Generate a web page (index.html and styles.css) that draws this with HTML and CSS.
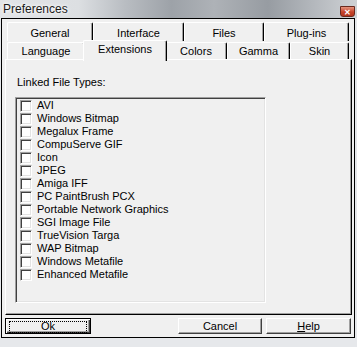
FILE: index.html
```html
<!DOCTYPE html>
<html lang="en">
<head>
    <meta charset="UTF-8">
    <meta name="viewport" content="width=device-width, initial-scale=1.0">
    <title>Preferences</title>
    <link rel="stylesheet" href="styles.css">
</head>
<body>
    <div class="window">
        <div class="titlebar">
            <span class="title">Preferences</span>
            <span class="close">&#x2715;</span>
        </div>

        <div class="dialog">
            <div class="tab-row back">
                <div class="tab w86">General</div>
                <div class="tab w91">Interface</div>
                <div class="tab w80">Files</div>
                <div class="tab w85">Plug-ins</div>
            </div>
            <div class="tab-row front">
                <div class="tab w78">Language</div>
                <div class="tab w80 active">Extensions</div>
                <div class="tab w62">Colors</div>
                <div class="tab w63">Gamma</div>
                <div class="tab w59">Skin</div>
            </div>

            <div class="panel">
                <div class="label">Linked File Types:</div>
                <div class="listbox">
                    <ul>
                        <li><span class="check"></span>AVI</li>
                        <li><span class="check"></span>Windows Bitmap</li>
                        <li><span class="check"></span>Megalux Frame</li>
                        <li><span class="check"></span>CompuServe GIF</li>
                        <li><span class="check"></span>Icon</li>
                        <li><span class="check"></span>JPEG</li>
                        <li><span class="check"></span>Amiga IFF</li>
                        <li><span class="check"></span>PC PaintBrush PCX</li>
                        <li><span class="check"></span>Portable Network Graphics</li>
                        <li><span class="check"></span>SGI Image File</li>
                        <li><span class="check"></span>TrueVision Targa</li>
                        <li><span class="check"></span>WAP Bitmap</li>
                        <li><span class="check"></span>Windows Metafile</li>
                        <li><span class="check"></span>Enhanced Metafile</li>
                    </ul>
                </div>
            </div>

            <div class="buttons">
                <button class="btn default"><span class="focus">Ok</span></button>
                <div class="spacer"></div>
                <button class="btn cancel">Cancel</button>
                <button class="btn help"><u>H</u>elp</button>
            </div>
        </div>
    </div>
</body>
</html>
```

FILE: styles.css
```css
body {
    margin: 0;
    background: #e6e8eb;
    font-family: "Liberation Sans", Arial, sans-serif;
    font-size: 11px;
    color: #000;
}
.window {
    width: 357px;
    height: 347px;
    display: flex;
    flex-direction: column;
}
.titlebar {
    height: 18px;
    display: flex;
    justify-content: space-between;
    align-items: flex-start;
    background: linear-gradient(to right, #e2e4e7 0%, #dcdfe2 22%, #b9bdc2 35%, #9da2a8 48%, #aeb2b7 60%, #979ca2 75%, #b4b8bd 88%, #cfd2d5 100%);
}
.title {
    font-size: 12px;
    line-height: 12px;
    padding: 3px 0 0 3px;
    color: #1a1a1a;
    text-shadow: 0 0 5px #fff, 0 0 3px #fff;
}
.close {
    width: 15px;
    height: 11px;
    margin: 6px 2px 0 0;
    border: 1px solid #6b2a1e;
    border-radius: 0 0 3px 3px;
    background: linear-gradient(#e5937d, #c6442b 55%, #b5351d);
    color: #fff;
    font-size: 8px;
    font-weight: bold;
    line-height: 11px;
    text-align: center;
    box-sizing: border-box;
}
.dialog {
    margin-left: 1px;
    width: 354px;
    height: 320px;
    box-sizing: border-box;
    border: 1px solid #000;
    background: #f0f0f0;
    padding: 3px 2px 0 3px;
    display: flex;
    flex-direction: column;
}
.tab-row {
    display: flex;
    align-items: flex-start;
    margin-left: 2px;
}
.tab-row.back { height: 19px; }
.tab-row.front { height: 18px; }
.tab {
    box-sizing: border-box;
    border-top: 1px solid #fff;
    border-left: 1px solid #fff;
    border-right: 1px solid #000;
    border-radius: 2px 2px 0 0;
    box-shadow: inset -1px 0 #a0a0a0;
    background: #f0f0f0;
    text-align: center;
    line-height: 13px;
}
.back .tab {
    height: 19px;
    padding-top: 4px;
}
.front .tab {
    height: 17px;
    margin-top: 1px;
    padding-top: 2px;
}
.front .tab.active {
    position: relative;
    z-index: 1;
    height: 21px;
    margin: -1px -2px 0;
    padding-top: 2px;
}
.w59 { width: 59px; }
.w62 { width: 62px; }
.w63 { width: 63px; }
.w78 { width: 78px; }
.w80 { width: 80px; }
.w85 { width: 85px; }
.w86 { width: 86px; }
.w91 { width: 91px; }
.front .tab.active.w80 { width: 84px; }
.panel {
    width: 347px;
    height: 256px;
    box-sizing: border-box;
    border-top: 1px solid #fff;
    border-left: 1px solid #fff;
    border-right: 1px solid #000;
    border-bottom: 1px solid #000;
    box-shadow: inset -1px -1px #a0a0a0;
    padding: 16px 0 0 9px;
}
.label {
    line-height: 13px;
    padding-left: 2px;
}
.listbox {
    margin-top: 8px;
    width: 251px;
    height: 206px;
    box-sizing: border-box;
    border: 1px solid;
    border-color: #a0a0a0 #fff #fff #a0a0a0;
    box-shadow: inset 1px 1px #404040, inset -1px -1px #e3e3e3;
}
.listbox ul {
    list-style: none;
    margin: 0;
    padding: 1px 0 0 4px;
}
.listbox li {
    height: 13px;
    line-height: 13px;
    display: flex;
    align-items: center;
}
.check {
    width: 12px;
    height: 12px;
    box-sizing: border-box;
    border: 1px solid;
    border-color: #a0a0a0 #fff #fff #a0a0a0;
    box-shadow: inset 1px 1px #404040, inset -1px -1px #e3e3e3;
    background: #fff;
    margin-right: 5px;
}
.buttons {
    display: flex;
    margin-top: 3px;
    padding-right: 1px;
    height: 16px;
}
.spacer { flex: 1; }
.btn {
    height: 16px;
    box-sizing: border-box;
    padding: 0;
    font-family: "Liberation Sans", Arial, sans-serif;
    font-size: 11px;
    line-height: 12px;
    color: #000;
    background: #f0f0f0;
    border: 1px solid;
    border-color: #fff #404040 #404040 #fff;
    box-shadow: inset -1px -1px #a0a0a0;
}
.btn.default {
    width: 86px;
    padding: 2px 3px;
    border-color: #000;
    box-shadow: inset 1px 1px #fff, inset -1px -1px #404040, inset -2px -2px #a0a0a0;
}
.focus {
    display: block;
    height: 10px;
    line-height: 9px;
    border: 1px dotted #000;
}
.cancel { width: 84px; }
.help { width: 85px; margin-left: 4px; }
```
